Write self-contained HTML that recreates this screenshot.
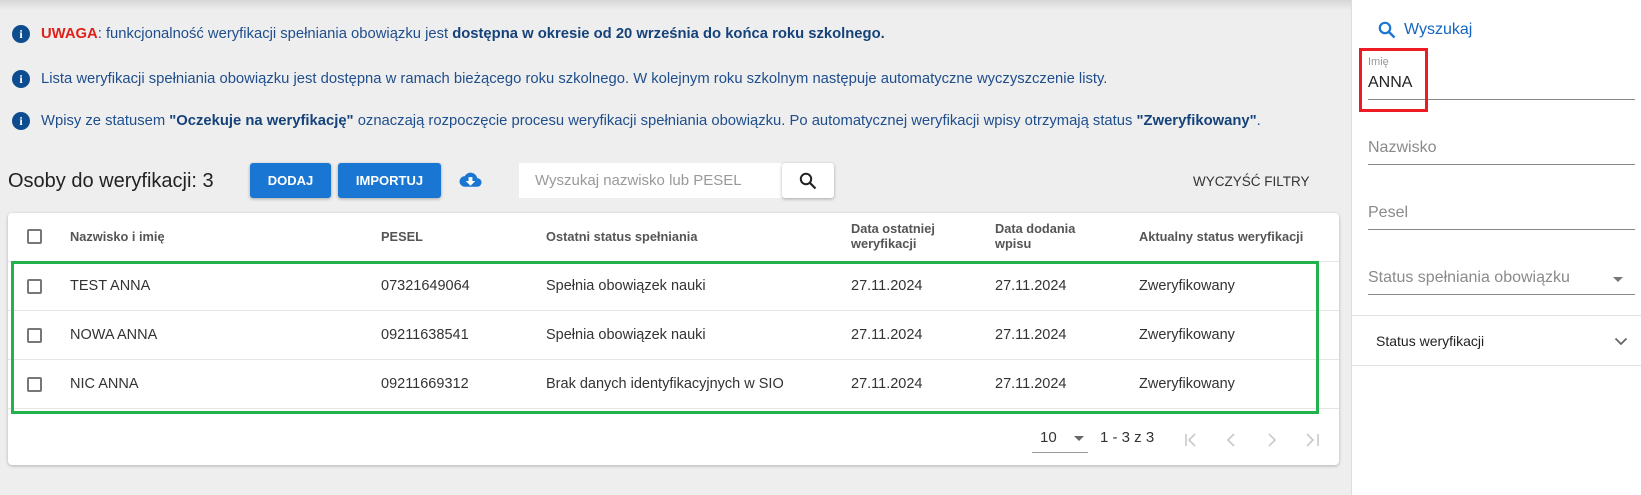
<!DOCTYPE html>
<html><head><meta charset="utf-8"><style>
*{margin:0;padding:0;box-sizing:border-box}
body{width:1641px;height:495px;overflow:hidden;background:#eeeeee;font-family:"Liberation Sans",sans-serif;position:relative;color:#333}
.a{position:absolute;white-space:nowrap}
.topsh{position:absolute;left:0;top:0;width:1641px;height:10px;background:linear-gradient(#d6d6d6,#eeeeee)}
.info{position:absolute;left:12px;width:18px;height:18px;border-radius:50%;background:#0d4d8f;color:#fff;font:bold 12px "Liberation Serif",serif;text-align:center;line-height:18px}
.it{position:absolute;left:41px;font-size:14.8px;color:#1f4e8c;white-space:nowrap}
.it b{color:#16427a}
.btn{position:absolute;top:163px;height:35px;background:#1976d2;color:#fff;font-size:13px;font-weight:bold;border-radius:3px;text-align:center;line-height:35px;box-shadow:0 1px 3px rgba(0,0,0,.3)}
.card{position:absolute;left:8px;top:213px;width:1331px;height:252px;background:#fff;border-radius:4px;box-shadow:0 1px 3px rgba(0,0,0,.25)}
.cb{position:absolute;left:19px;width:15px;height:15px;border:2px solid #777;border-radius:2px}
.h{position:absolute;font-size:12.8px;color:#555;font-weight:bold;line-height:15px}
.c{position:absolute;font-size:14.5px;color:#333;white-space:nowrap}
.sep{position:absolute;left:0;width:1331px;height:1px;background:#e6e6e6}
.panel{position:absolute;left:1351px;top:0;width:290px;height:495px;background:#fff;border-left:1px solid #ddd}
.lab{position:absolute;left:16px;font-size:16px;color:#8a8a8a}
.ul{position:absolute;left:16px;width:267px;height:1px;background:#888}
</style></head><body>
<div class="topsh"></div>
<div class="info" style="top:25px">i</div>
<div class="it" style="top:26px"><b style="color:#e0201b">UWAGA</b>: funkcjonalność weryfikacji spełniania obowiązku jest <b>dostępna w okresie od 20 września do końca roku szkolnego.</b></div>
<div class="info" style="top:70px">i</div>
<div class="it" style="top:71px">Lista weryfikacji spełniania obowiązku jest dostępna w ramach bieżącego roku szkolnego. W kolejnym roku szkolnym następuje automatyczne wyczyszczenie listy.</div>
<div class="info" style="top:112px">i</div>
<div class="it" style="top:113px">Wpisy ze statusem <b>"Oczekuje na weryfikację"</b> oznaczają rozpoczęcie procesu weryfikacji spełniania obowiązku. Po automatycznej weryfikacji wpisy otrzymają status <b>"Zweryfikowany"</b>.</div>

<div class="a" style="left:8px;top:170px;font-size:20px;color:#222">Osoby do weryfikacji: 3</div>
<div class="btn" style="left:250px;width:81px">DODAJ</div>
<div class="btn" style="left:338px;width:103px">IMPORTUJ</div>
<svg class="a" style="left:459px;top:171px" width="23" height="18" viewBox="0 0 24 18"><path d="M19 7A7 7 0 0 0 6 5 5.5 5.5 0 0 0 6 16h13a4.5 4.5 0 0 0 0-9z" fill="#1976d2"/><path d="M10 6h4v4h3l-5 5-5-5h3z" fill="#fff"/></svg>
<div class="a" style="left:519px;top:163px;width:263px;height:35px;background:#fff;font-size:15px;color:#999;line-height:35px;padding-left:16px">Wyszukaj nazwisko lub PESEL</div>
<div class="a" style="left:782px;top:163px;width:52px;height:35px;background:#fff;border-radius:3px;box-shadow:0 1px 3px rgba(0,0,0,.3)"><svg style="position:absolute;left:17px;top:9px" width="18" height="18" viewBox="0 0 18 18"><circle cx="7" cy="7" r="5.2" fill="none" stroke="#222" stroke-width="2"/><path d="M11 11l5.5 5.5" stroke="#222" stroke-width="2.2"/></svg></div>
<div class="a" style="left:1193px;top:174px;font-size:13.5px;color:#333">WYCZYŚĆ FILTRY</div>

<div class="card">
<div class="cb" style="top:16px"></div>
<div class="h" style="left:62px;top:16px">Nazwisko i imię</div>
<div class="h" style="left:373px;top:16px">PESEL</div>
<div class="h" style="left:538px;top:16px">Ostatni status spełniania</div>
<div class="h" style="left:843px;top:8px">Data ostatniej<br>weryfikacji</div>
<div class="h" style="left:987px;top:8px">Data dodania<br>wpisu</div>
<div class="h" style="left:1131px;top:16px">Aktualny status weryfikacji</div>
<div class="sep" style="top:48px"></div>
<div class="cb" style="top:66px"></div><div class="c" style="left:62px;top:65px">TEST ANNA</div><div class="c" style="left:373px;top:65px">07321649064</div><div class="c" style="left:538px;top:65px">Spełnia obowiązek nauki</div><div class="c" style="left:843px;top:65px">27.11.2024</div><div class="c" style="left:987px;top:65px">27.11.2024</div><div class="c" style="left:1131px;top:65px">Zweryfikowany</div>
<div class="sep" style="top:97px"></div>
<div class="cb" style="top:115px"></div><div class="c" style="left:62px;top:114px">NOWA ANNA</div><div class="c" style="left:373px;top:114px">09211638541</div><div class="c" style="left:538px;top:114px">Spełnia obowiązek nauki</div><div class="c" style="left:843px;top:114px">27.11.2024</div><div class="c" style="left:987px;top:114px">27.11.2024</div><div class="c" style="left:1131px;top:114px">Zweryfikowany</div>
<div class="sep" style="top:146px"></div>
<div class="cb" style="top:164px"></div><div class="c" style="left:62px;top:163px">NIC ANNA</div><div class="c" style="left:373px;top:163px">09211669312</div><div class="c" style="left:538px;top:163px">Brak danych identyfikacyjnych w SIO</div><div class="c" style="left:843px;top:163px">27.11.2024</div><div class="c" style="left:987px;top:163px">27.11.2024</div><div class="c" style="left:1131px;top:163px">Zweryfikowany</div>
<div class="sep" style="top:195px"></div>
<div class="c" style="left:1032px;top:216px;font-size:15px">10</div>
<div class="a" style="left:1066px;top:223px;border-left:5px solid transparent;border-right:5px solid transparent;border-top:5px solid #666"></div>
<div class="a" style="left:1024px;top:239px;width:56px;height:1px;background:#999"></div>
<div class="c" style="left:1092px;top:216px;font-size:15px">1 - 3 z 3</div>
<svg class="a" style="left:1176px;top:219px" width="140" height="16" viewBox="0 0 140 16" fill="none" stroke="#c8c8c8" stroke-width="1.6"><path d="M2 2v12M11 2 5 8l6 6"/><path d="M50 2 44 8l6 6"/><path d="M85 2l6 6-6 6"/><path d="M123 2l6 6-6 6M134 2v12"/></svg>
</div>
<div class="a" style="left:11px;top:261px;width:1308px;height:153px;border:3px solid #22b14c"></div>

<div class="panel">
<svg class="a" style="left:26px;top:21px" width="18" height="18" viewBox="0 0 18 18"><circle cx="7" cy="7" r="5.2" fill="none" stroke="#1976d2" stroke-width="2.2"/><path d="M11 11l5.5 5.5" stroke="#1976d2" stroke-width="2.4"/></svg>
<div class="a" style="left:52px;top:21px;font-size:16px;color:#1565c0">Wyszukaj</div>
<div class="a" style="left:16px;top:56px;font-size:11px;color:#999">Imię</div>
<div class="a" style="left:16px;top:74px;font-size:16px;color:#222">ANNA</div>
<div class="ul" style="top:99px"></div>
<div class="lab" style="top:139px">Nazwisko</div><div class="ul" style="top:164px"></div>
<div class="lab" style="top:204px">Pesel</div><div class="ul" style="top:229px"></div>
<div class="lab" style="top:269px">Status spełniania obowiązku</div><div class="ul" style="top:294px"></div>
<div class="a" style="left:261px;top:277px;border-left:5px solid transparent;border-right:5px solid transparent;border-top:5px solid #777"></div>
<div class="a" style="left:0;top:315px;width:290px;height:1px;background:#e0e0e0"></div>
<div class="a" style="left:24px;top:333px;font-size:14px;color:#222">Status weryfikacji</div>
<svg class="a" style="left:262px;top:337px" width="14" height="9" viewBox="0 0 14 9"><path d="M1.5 1.5l5.5 5.5 5.5-5.5" fill="none" stroke="#666" stroke-width="1.8"/></svg>
<div class="a" style="left:0;top:365px;width:290px;height:1px;background:#e0e0e0"></div>
</div>
<div class="a" style="left:1359px;top:48px;width:69px;height:64px;border:3px solid #ed1c24"></div>
</body></html>
